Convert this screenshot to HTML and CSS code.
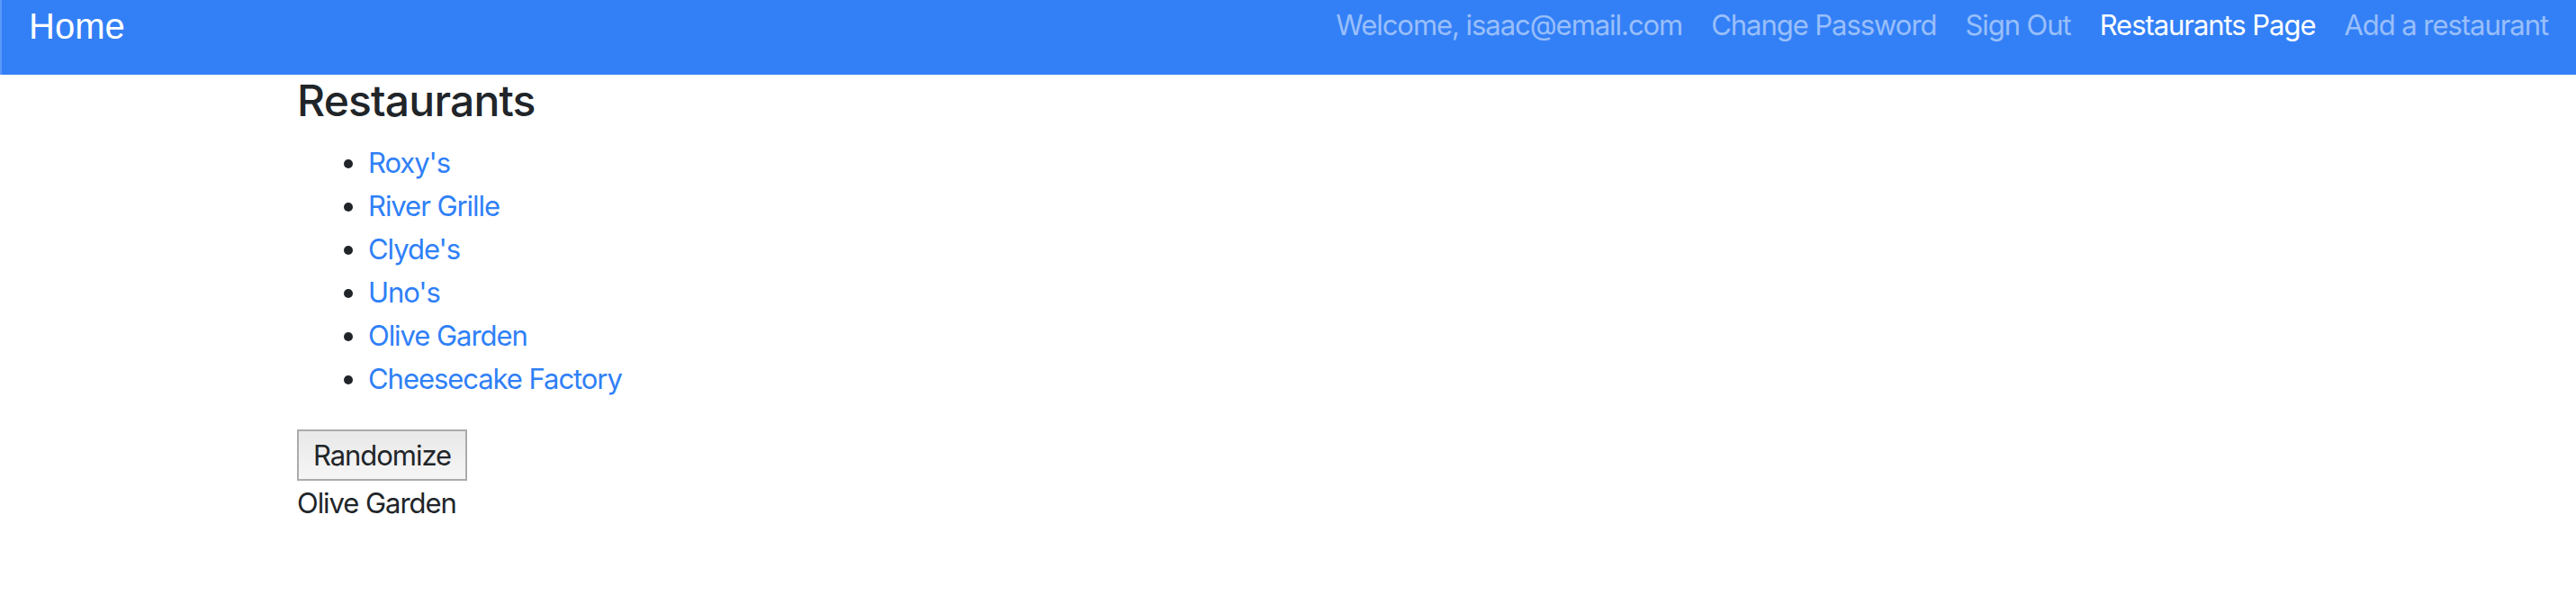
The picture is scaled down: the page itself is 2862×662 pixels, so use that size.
FILE: index.html
```html
<!DOCTYPE html>
<html lang="en">
<head>
<meta charset="utf-8">
<title>Restaurants</title>
<link rel="stylesheet" href="styles.css">
</head>
<body>
<nav class="navbar">
  <a class="brand" href="#">Home</a>
  <ul class="nav">
    <li><a class="nav-link" href="#">Welcome, isaac@email.com</a></li>
    <li><a class="nav-link" href="#">Change Password</a></li>
    <li><a class="nav-link" href="#">Sign Out</a></li>
    <li><a class="nav-link active" href="#">Restaurants Page</a></li>
    <li><a class="nav-link" href="#">Add a restaurant</a></li>
  </ul>
</nav>
<main class="container">
  <h4 class="title">Restaurants</h4>
  <ul class="list">
    <li><a href="#">Roxy's</a></li>
    <li><a href="#">River Grille</a></li>
    <li><a href="#">Clyde's</a></li>
    <li><a href="#">Uno's</a></li>
    <li><a href="#">Olive Garden</a></li>
    <li><a href="#">Cheesecake Factory</a></li>
  </ul>
  <button class="btn" type="button">Randomize</button>
  <div class="result">Olive Garden</div>
</main>
</body>
</html>
```
FILE: styles.css
```css
* { box-sizing: border-box; }
html, body { margin: 0; padding: 0; background: #fff; }
body {
  font-family: Inter, "Noto Sans", sans-serif;
  font-size: 31px;
  line-height: 48px;
  color: #212529;
  letter-spacing: -1.05px;
}
a { text-decoration: none; color: #2f80f7; }

.navbar {
  display: flex;
  align-items: flex-start;
  justify-content: space-between;
  height: 83px;
  background: #3380f6;
  border-left: 2px solid #5a98f8;
  padding: 0 15px 0 30px;
}
.brand {
  font-family: "Liberation Sans", Arial, sans-serif;
  font-size: 40px;
  line-height: 46px;
  letter-spacing: 0;
  color: #fff;
  margin-top: 6px;
}
.nav {
  display: flex;
  list-style: none;
  margin: 4px 0 0;
  padding: 0;
}
.nav-link {
  display: block;
  padding: 0 16px;
  color: rgba(255, 255, 255, 0.5);
}
.nav-link.active { color: #fff; }

.container { padding: 0 330px; }
.title {
  margin: 0 0 16px;
  font-size: 48px;
  line-height: 57.6px;
  font-weight: 500;
  letter-spacing: -0.8px;
}
.list {
  margin: 0 0 32px;
  padding-left: 79px;
}
.btn {
  display: block;
  margin: 0 0 1px;
  height: 57px;
  padding: 0 16px;
  border: 2px solid #ababab;
  border-radius: 0;
  background: linear-gradient(#e8e8e8, #f6f6f6);
  font-family: inherit;
  font-size: 31px;
  line-height: 53px;
  letter-spacing: -1.05px;
  color: #212529;
}
.result { line-height: 48px; }
```
